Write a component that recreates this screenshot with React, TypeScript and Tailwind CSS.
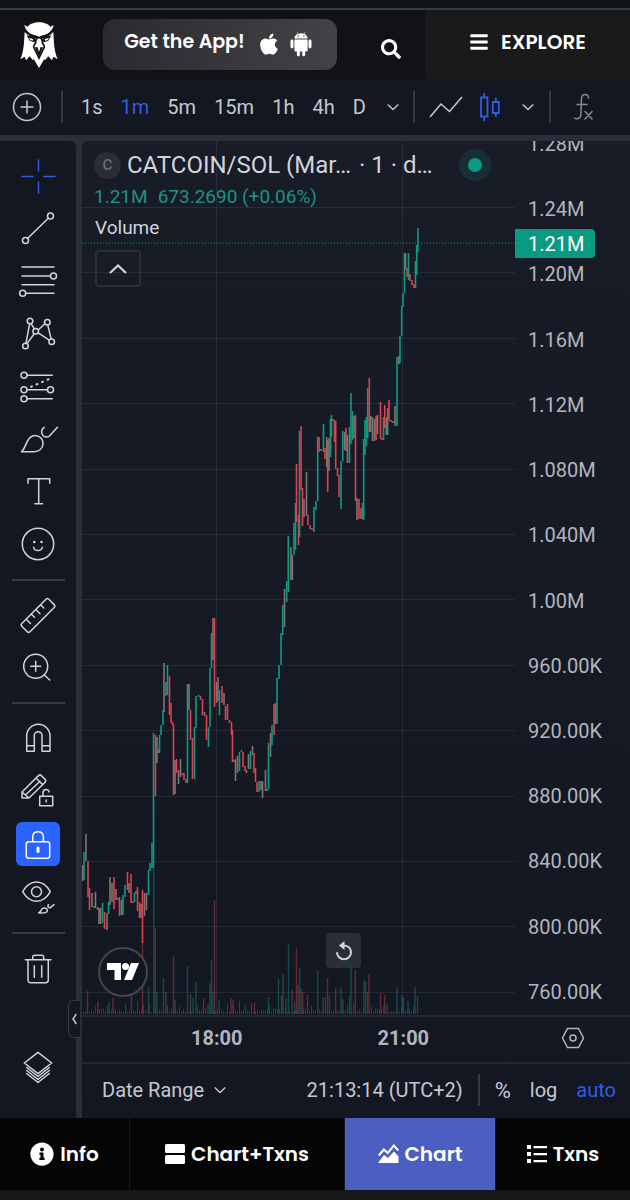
import { useState, type ReactNode } from 'react'
import { FaApple, FaBars, FaInfoCircle, FaSearch } from 'react-icons/fa'
import { AiFillAndroid } from 'react-icons/ai'

type Tone = 'up' | 'down' | 'mix'
type Candle = [x: number, high: number, low: number, tone: Tone]

const toneColor: Record<Tone, string> = {
  up: '#0f9a82',
  down: '#e0404f',
  mix: '#80756f',
}

const candles: Candle[] = [
  [82.5, 865, 881, 'mix'], [84, 852, 880, 'up'], [86, 834, 861, 'mix'], [88, 861, 897, 'down'],
  [89.5, 888, 910, 'down'], [92, 893, 907, 'mix'], [94, 906, 908, 'up'], [95.5, 892, 908, 'mix'],
  [97.5, 907, 910, 'down'], [99, 908, 924, 'mix'], [100.5, 908, 924, 'mix'], [102.5, 903, 923, 'up'],
  [104.5, 912, 929, 'down'], [107, 913, 930, 'mix'], [108.5, 902, 914, 'up'], [110, 877, 905, 'mix'],
  [112, 883, 902, 'mix'], [114, 877, 909, 'down'], [116, 889, 900, 'mix'], [118, 898, 900, 'up'],
  [119.5, 897, 916, 'down'], [121.5, 900, 915, 'mix'], [123, 895, 915, 'up'], [125, 885, 897, 'up'],
  [127.5, 872, 890, 'down'], [129, 883, 893, 'mix'], [131, 874, 903, 'down'], [133, 901, 903, 'down'],
  [134.5, 893, 902, 'up'], [136, 891, 894, 'up'], [137.5, 887, 911, 'down'], [139.5, 902, 918, 'down'],
  [141, 904, 918, 'mix'], [142.5, 890, 943, 'down'], [144.5, 893, 916, 'mix'], [146.5, 893, 910, 'mix'],
  [148.5, 870, 895, 'up'], [150, 863, 871, 'up'], [152, 843, 868, 'up'], [153.5, 733, 868, 'up'],
  [155.5, 735, 796, 'down'], [157, 737, 763, 'mix'], [158.5, 750, 753, 'down'], [159.5, 735, 753, 'up'],
  [161, 725, 735, 'up'], [163, 710, 725, 'up'], [164, 663, 712, 'mix'], [166, 682, 696, 'up'],
  [167.5, 665, 695, 'up'], [169.5, 676, 715, 'down'], [171, 703, 723, 'down'], [172.5, 722, 725, 'down'],
  [173.5, 724, 795, 'down'], [175, 760, 794, 'mix'], [176.5, 759, 773, 'down'], [178.5, 770, 784, 'mix'],
  [180.5, 759, 777, 'mix'], [182.5, 773, 775, 'down'], [184, 773, 780, 'down'], [186, 779, 783, 'down'],
  [187.5, 684, 783, 'up'], [189, 684, 710, 'mix'], [190.5, 710, 740, 'down'], [192.5, 738, 779, 'down'],
  [194.5, 727, 779, 'up'], [196, 696, 728, 'up'], [198.5, 695, 697, 'up'], [200.5, 696, 700, 'down'],
  [202.5, 699, 715, 'down'], [204.5, 712, 716, 'mix'], [206.5, 715, 740, 'down'], [208.5, 727, 747, 'up'],
  [210, 668, 727, 'up'], [211.5, 633, 668, 'up'], [213, 618, 660, 'mix'], [214.5, 618, 707, 'down'],
  [216.5, 682, 703, 'mix'], [218, 677, 701, 'mix'], [219.5, 690, 715, 'up'], [222, 686, 703, 'down'],
  [224, 693, 705, 'mix'], [225.5, 706, 720, 'down'], [227.5, 704, 720, 'down'], [229.5, 720, 723, 'down'],
  [231.5, 722, 735, 'down'], [232.5, 730, 762, 'down'], [234, 760, 762, 'down'], [235.5, 759, 781, 'mix'],
  [237.5, 756, 773, 'mix'], [239.5, 752, 771, 'up'], [241.5, 750, 752, 'up'], [243, 752, 767, 'down'],
  [245, 766, 771, 'down'], [246.5, 770, 773, 'mix'], [248.5, 754, 769, 'mix'], [250.5, 751, 769, 'up'],
  [252.5, 746, 755, 'mix'], [254, 753, 773, 'down'], [255.5, 768, 782, 'down'], [257, 782, 792, 'down'],
  [259, 781, 792, 'up'], [261, 781, 790, 'mix'], [262.5, 781, 798, 'mix'], [265.5, 770, 791, 'mix'],
  [267, 789, 791, 'mix'], [268.5, 743, 789, 'up'], [270.5, 733, 757, 'mix'], [272, 725, 745, 'up'],
  [274, 704, 735, 'down'], [275.5, 703, 724, 'down'], [277, 678, 724, 'up'], [279, 665, 679, 'up'],
  [281, 633, 665, 'up'], [282.7, 605, 635, 'up'], [284.5, 589, 627, 'mix'], [286.7, 581, 602, 'up'],
  [288.3, 536, 592, 'up'], [291, 547, 580, 'mix'], [292.3, 555, 580, 'mix'], [294, 523, 555, 'up'],
  [295.5, 503, 550, 'up'], [296.5, 464, 522, 'down'], [298.5, 515, 545, 'down'], [299.5, 431, 537, 'up'],
  [301, 426, 490, 'down'], [302.5, 488, 526, 'down'], [304, 499, 517, 'mix'], [306.5, 472, 516, 'mix'],
  [308, 515, 525, 'down'], [310, 525, 529, 'down'], [312, 528, 530, 'down'], [314, 507, 532, 'up'],
  [316, 501, 510, 'up'], [317.7, 437, 501, 'up'], [319, 437, 452, 'down'], [321, 449, 451, 'mix'],
  [323.5, 424, 452, 'up'], [325, 448, 459, 'down'], [326.7, 437, 467, 'mix'], [327.7, 440, 492, 'down'],
  [329, 438, 471, 'mix'], [330.5, 419, 457, 'up'], [331.5, 415, 437, 'up'], [333, 419, 421, 'mix'],
  [334.5, 420, 442, 'down'], [335.7, 421, 469, 'down'], [337.5, 468, 476, 'down'], [339, 475, 497, 'down'],
  [341, 461, 509, 'up'], [342.7, 431, 461, 'up'], [344.5, 432, 450, 'mix'], [346, 428, 451, 'down'],
  [347.5, 435, 463, 'mix'], [349.5, 427, 463, 'up'], [351, 393, 444, 'up'], [352.5, 411, 440, 'up'],
  [354, 416, 438, 'mix'], [355.5, 415, 501, 'down'], [357, 498, 520, 'mix'], [359, 499, 519, 'down'],
  [361, 508, 519, 'down'], [362.5, 503, 519, 'up'], [363.7, 439, 520, 'up'], [365, 420, 455, 'up'],
  [366.5, 417, 446, 'up'], [367.7, 388, 438, 'up'], [369.3, 378, 432, 'down'], [370.7, 416, 432, 'mix'],
  [372.5, 417, 441, 'mix'], [374.5, 419, 441, 'mix'], [376, 416, 440, 'down'], [377.5, 415, 434, 'mix'],
  [380.5, 402, 439, 'down'], [382, 438, 440, 'down'], [383.5, 417, 440, 'up'], [384.7, 405, 428, 'down'],
  [386.3, 417, 435, 'mix'], [387.7, 408, 435, 'up'], [389, 400, 421, 'down'], [391, 420, 422, 'down'],
  [393, 421, 423, 'mix'], [395, 406, 426, 'mix'], [397, 357, 426, 'up'], [398.7, 356, 364, 'mix'],
  [400, 336, 363, 'up'], [401.7, 306, 336, 'up'], [403, 293, 307, 'up'], [404.5, 253, 293, 'up'],
  [405.5, 253, 269, 'mix'], [407, 268, 277, 'down'], [408.5, 253, 280, 'up'], [410, 274, 281, 'down'],
  [412, 280, 285, 'down'], [414, 284, 288, 'down'], [415.5, 261, 288, 'up'], [416.7, 245, 275, 'up'],
  [418, 228, 252, 'up'],
]

// the tall volume bars: [x, top, tone]
const volumeSpikes: [number, number, Tone][] = [
  [87.5, 991, 'down'], [98, 1001, 'down'], [109, 1002, 'up'], [113, 998, 'down'], [131.5, 995, 'down'],
  [142.5, 943, 'down'], [148.5, 987, 'up'], [153.8, 867, 'up'], [155.2, 928, 'mix'], [157, 992, 'up'],
  [163.5, 978, 'up'], [166, 992, 'mix'], [173.5, 956, 'down'], [175, 1000, 'mix'], [187.5, 966, 'up'],
  [190.5, 994, 'mix'], [193, 998, 'up'], [196, 982, 'up'], [203.5, 998, 'down'], [208, 1004, 'up'],
  [210, 983, 'up'], [211.5, 960, 'up'], [213, 991, 'up'], [214.5, 900, 'down'], [219, 1000, 'up'],
  [231, 998, 'down'], [233, 1000, 'down'], [254.5, 1003, 'down'], [268.5, 997, 'up'], [278.5, 979, 'up'],
  [281.5, 996, 'up'], [283, 974, 'mix'], [286, 998, 'up'], [288.5, 944, 'up'], [292, 990, 'down'],
  [294.5, 1001, 'up'], [296.5, 948, 'down'], [298, 985, 'mix'], [299.7, 968, 'up'], [301, 988, 'up'],
  [302.7, 992, 'down'], [307.5, 995, 'down'], [317.7, 970, 'up'], [323, 997, 'up'], [325.5, 997, 'down'],
  [327.5, 978, 'down'], [329.5, 995, 'up'], [335.7, 988, 'down'], [341, 987, 'up'], [343, 999, 'up'],
  [349.5, 996, 'up'], [351, 968, 'up'], [355.3, 970, 'down'], [364, 980, 'up'], [365.5, 982, 'up'],
  [367.5, 992, 'down'], [369, 974, 'down'], [380.5, 993, 'down'], [384.7, 995, 'down'], [387, 1004, 'up'],
  [397, 987, 'up'], [402, 995, 'up'], [403.5, 998, 'up'], [408, 1001, 'up'], [415, 987, 'up'],
  [417.5, 996, 'up'],
]

const prices = [
  '1.28M', '1.24M', '1.20M', '1.16M', '1.12M', '1.080M', '1.040M', '1.00M',
  '960.00K', '920.00K', '880.00K', '840.00K', '800.00K', '760.00K',
]

function PriceChart() {
  return (
    <svg viewBox="82 141 433 874" preserveAspectRatio="none" className="block h-full w-full" role="img" aria-label="CATCOIN/SOL price chart">
      <g stroke="#ffffff" strokeOpacity="0.07">
        {prices.slice(1).map((p, i) => (
          <line key={p} x1="82" x2="515" y1={207.5 + Math.round(i * 65.4)} y2={207.5 + Math.round(i * 65.4)} />
        ))}
        <line x1="216.5" x2="216.5" y1="141" y2="1015" />
        <line x1="402.5" x2="402.5" y1="141" y2="1015" />
      </g>
      <g opacity="0.4">
        {Array.from({ length: 168 }, (_, i) => {
          const h = 2 + ((i * i * 7 + i * 13) % 17) * ((i * 5) % 3 === 0 ? 0.8 : 0.25)
          return <rect key={i} x={83 + i * 2} y={1014 - h} width="1" height={h} fill={i % 7 < 3 ? toneColor.down : toneColor.up} />
        })}
        {volumeSpikes.map(([x, top, tone]) => (
          <rect key={x} x={x - 0.7} y={top} width="1.4" height={1014 - top} fill={toneColor[tone]} />
        ))}
      </g>
      {candles.map(([x, high, low, tone]) => (
        <rect key={x} x={x - 0.8} y={high} width="1.6" height={low - high} fill={toneColor[tone]} />
      ))}
      <line x1="82" x2="515" y1="243" y2="243" stroke="#0f9a82" strokeDasharray="1 2" />
    </svg>
  )
}

function Icon({ children, className = 'size-11' }: { children: ReactNode; className?: string }) {
  return (
    <svg viewBox="0 0 44 44" className={className} fill="none" stroke="currentColor" strokeWidth="1.5" strokeLinecap="round" strokeLinejoin="round" aria-hidden="true">
      {children}
    </svg>
  )
}

const drawTools: { name: string; icon: ReactNode }[] = [
  { name: 'Cross', icon: <path d="M6 22.5h11M28 22.5h11M22.5 6v11M22.5 28v11" /> },
  {
    name: 'Trend line',
    icon: <><circle cx="9.5" cy="33.5" r="3" /><circle cx="34.5" cy="9" r="3" /><path d="M11.7 31.3 32.3 11.2" /></>,
  },
  {
    name: 'Fib retracement',
    icon: <><path d="M6 8h32M6 17h28.5M6 25.7h32M10 34.3h28" /><circle cx="37.5" cy="17" r="3" /><circle cx="6.7" cy="34.3" r="3" /></>,
  },
  {
    name: 'XABCD pattern',
    icon: (
      <>
        <circle cx="14" cy="9" r="2.8" /><circle cx="31.3" cy="10.3" r="2.8" /><circle cx="19.7" cy="19.3" r="2.8" />
        <circle cx="9.5" cy="34" r="2.8" /><circle cx="35.7" cy="29.7" r="2.8" />
        <path d="m15 11.6 3.4 5.2M13.6 11.8 10 31.2M11 31.6l7.2-9.8M22.2 18l6.7-6.2M31.8 13.1l3.3 13.8M22.2 20.9l11.1 7.2" />
      </>
    ),
  },
  {
    name: 'Long position',
    icon: (
      <>
        <circle cx="8" cy="11.3" r="3" /><circle cx="8" cy="25.7" r="3" /><circle cx="34.5" cy="25.7" r="3" /><circle cx="8" cy="34.7" r="3" />
        <path d="M11 11.3h25.3M11 25.7h20.5M11 34.7h25.3" />
        <path d="M15 22.8 36 13.8" strokeDasharray="1 5" strokeWidth="2" />
      </>
    ),
  },
  {
    name: 'Brush',
    icon: <path d="M5.5 34.7C9.5 31.5 10 24 14 20.6c5-4.4 13-1 13 5.9 0 5-4 8.2-9 8.2ZM28.3 10.3c-4.6 2.7-2.8 9.7 2.4 9.7 1.2 0 2.2-.4 3-1.2l7.7-8.5" />,
  },
  { name: 'Text', icon: <path d="M12 14.3V9.7h21.7v4.6M22.7 9.7v25M19 34.7h7.5" /> },
  {
    name: 'Icon',
    icon: (
      <>
        <circle cx="22" cy="22" r="15.7" />
        <circle cx="18.3" cy="20" r="1.3" fill="currentColor" stroke="none" /><circle cx="25.5" cy="20" r="1.3" fill="currentColor" stroke="none" />
        <path d="M17.7 25.3c1 4.3 7.6 4.3 8.6 0" />
      </>
    ),
  },
]

const measureTools: { name: string; icon: ReactNode }[] = [
  {
    name: 'Measure',
    icon: <path d="M30 6.2a2 2 0 0 1 2.8 0l5.4 5.4a2 2 0 0 1 0 2.8L14 38.7a2 2 0 0 1-2.8 0l-5.4-5.4a2 2 0 0 1 0-2.8ZM10.5 26.5l4 4M15.5 21.2l3 3M20 16.8l4 4M24.8 12l3 3" />,
  },
  { name: 'Zoom in', icon: <><circle cx="19.7" cy="21.3" r="12" /><path d="M14.7 21.3h10M19.7 16.3v10M28.3 30l5.4 5" /></> },
]

const lockTools: { name: string; icon: ReactNode }[] = [
  {
    name: 'Magnet mode',
    icon: <path d="M10.7 20a11.6 11.6 0 0 1 23.3 0v15.3h-8V19.5a3.8 3.8 0 0 0-7.7 0v15.8h-7.6ZM10.7 29.7h7.6M26 29.7h8" />,
  },
  {
    name: 'Stay in drawing mode',
    icon: (
      <>
        <path d="M6 29v-6L22.5 6.6a2 2 0 0 1 2.8 0l3.800 3.800a2 2 0 0 1 0 2.800L13 29ZM6 23l7 6M20 9l6.800 6.800M9.500 26 24 12.200" />
        <path d="M23.7 27.3h13v9.4h-13ZM27 27v-3.5c0-4 6-4 6-.5M30.2 31v2" />
      </>
    ),
  },
  {
    name: 'Lock all drawings',
    icon: (
      <>
        <rect x="10.3" y="19.7" width="23.4" height="16.6" rx="2.5" />
        <path d="M16.7 19.5v-5a5.4 5.4 0 0 1 10.7 0v5" />
        <path d="M22 26v3.5" strokeWidth="3" />
      </>
    ),
  },
  {
    name: 'Hide all drawings',
    icon: (
      <>
        <path d="M6.7 16.7c3-5.500 8-9.700 13.800-9.700s10.800 4.200 13.800 9.700c-3 5.500-8 9.600-13.800 9.600S9.700 22.200 6.700 16.700Z" />
        <circle cx="20.5" cy="16.7" r="5" />
        <path d="M22.700 38c2-1 2.200-3.500 4-4.600 2.600-1.400 5.400.6 4.500 2.900-.8 2-4.500 1.900-8.500 1.700ZM32.500 29.500c-1.500 1.700 0 3.800 1.800 3.200l3.700-3" />
      </>
    ),
  },
]

function ToolButton({ name, active, filled, onClick, children }: { name: string; active?: boolean; filled?: boolean; onClick?: () => void; children: ReactNode }) {
  return (
    <button
      type="button"
      aria-label={name}
      onClick={onClick}
      className={`size-11 rounded-md ${filled ? 'bg-[#2962ff] text-white' : active ? 'text-[#2f5de0]' : 'text-[#d1d4dc]'}`}
    >
      <Icon>{children}</Icon>
    </button>
  )
}

function Chevron({ className = '' }: { className?: string }) {
  return (
    <svg viewBox="0 0 12 8" className={`h-2 w-3 ${className}`} fill="none" stroke="currentColor" strokeWidth="1.4" aria-hidden="true">
      <path d="m.7 1.5 5.3 5 5.3-5" />
    </svg>
  )
}

function EagleLogo() {
  return (
    <svg viewBox="33 24 114 138" className="h-[46px] w-[38px]" aria-hidden="true">
      <path fill="#fff" d="m46 33 10 5c12-18 56-18 68 0l10-5c-3 14-10 22-20 27l-24 9-24-9c-10-5-17-13-20-27Z" />
      <path fill="#fff" d="M47 54c-2 26-1 54-13 82l13-8 4 11 11-12 10 12 2-4 16 27 16-27 2 4 10-12 11 12 4-11 13 8c-12-28-11-56-13-82l-19 15-24 6-24-6Z" />
      <path fill="none" stroke="#121216" strokeWidth="6" d="M50 50c6 10 18 16 32 18l8 5 8-5c14-2 26-8 32-18" />
      <path fill="#121216" d="m53 64 9 16 13 5 5-5-2-10ZM127 64l-9 16-13 5-5-5 2-10Z" />
      <path fill="#fff" d="m60 71 13 5-2 4c-5 0-9-3-11-9ZM120 71l-13 5 2 4c5 0 9-3 11-9Z" />
      <path fill="#fff" stroke="#121216" strokeWidth="5" strokeLinejoin="miter" d="M90 71c-8 0-10 6-10 14-1 6-6 8-6 14l16 33 16-33c0-6-5-8-6-14 0-8-2-14-10-14Z" />
      <path fill="#121216" d="m78 100 7-1 5 14 5-14 7 1-12 30Z" />
    </svg>
  )
}

function Header() {
  return (
    <header className="flex h-[69px] bg-[#121216] text-white">
      <div className="flex flex-1 items-center justify-between pr-6 pl-5">
        <a href="#home" aria-label="Home">
          <EagleLogo />
        </a>
        <a href="#app" className="mr-5 ml-5 flex h-[51px] w-[234px] items-center justify-center rounded-xl bg-gradient-to-r from-[#2b2b2f] to-[#434246] pb-0.5 text-[19px] font-semibold whitespace-nowrap">
          <span className="pb-0.5">Get the App!</span>
          <FaApple className="ml-3 size-6" />
          <AiFillAndroid className="ml-1.5 size-7" />
        </a>
        <button type="button" aria-label="Search">
          <FaSearch className="mt-2 size-5" />
        </button>
      </div>
      <button type="button" className="flex w-[205px] items-center justify-center gap-3 bg-[#1a1a1a] pb-1.5 text-[20px] font-semibold">
        <FaBars className="size-5" />
        EXPLORE
      </button>
    </header>
  )
}

const intervals = ['1s', '1m', '5m', '15m', '1h', '4h', 'D']

function Toolbar() {
  const [interval, setInterval] = useState('1m')

  return (
    <div className="flex h-14 items-center overflow-hidden bg-[#131722] pl-3 font-[Roboto,sans-serif] text-[20px] text-[#c5c8d2]">
      <button type="button" aria-label="Add symbol" className="mr-[19px] shrink-0">
        <svg viewBox="0 0 30 30" className="size-[30px]" fill="none" stroke="currentColor" strokeWidth="1.5" aria-hidden="true">
          <circle cx="15" cy="15" r="13.5" />
          <path d="M15 8.5v13M8.5 15h13" />
        </svg>
      </button>
      <span className="h-8 w-0.5 shrink-0 bg-[#363a45]" />
      <div className="ml-[18px] flex gap-[18px]">
        {intervals.map((item) => (
          <button key={item} type="button" onClick={() => setInterval(item)} className={item === interval ? 'text-[#2f5de0]' : ''}>
            {item}
          </button>
        ))}
      </div>
      <button type="button" aria-label="More intervals" className="ml-[21px] shrink-0">
        <Chevron />
      </button>
      <span className="ml-[14px] h-8 w-0.5 shrink-0 bg-[#363a45]" />
      <button type="button" aria-label="Line chart" className="ml-[14px] shrink-0">
        <svg viewBox="0 0 34 22" className="h-[22px] w-[34px]" fill="none" stroke="currentColor" strokeWidth="1.5" aria-hidden="true">
          <path d="M1 21 12 8l8.5 7.5L33 1" />
        </svg>
      </button>
      <button type="button" aria-label="Candles" className="ml-[17px] shrink-0 text-[#2f5de0]">
        <svg viewBox="0 0 20 30" className="h-[30px] w-5" fill="none" stroke="currentColor" strokeWidth="1.8" aria-hidden="true">
          <path d="M1 5.5h6.5v19H1ZM4.200 1v4.500M4.200 24.500V29M12.800 10h6v11h-6ZM15.800 5.500V10M15.800 21v4" />
        </svg>
      </button>
      <button type="button" aria-label="More chart types" className="ml-[22px] shrink-0">
        <Chevron />
      </button>
      <span className="ml-[15px] h-8 w-0.5 shrink-0 bg-[#363a45]" />
      <button type="button" aria-label="Indicators" className="ml-[22px] shrink-0 text-[#858994]">
        <svg viewBox="0 0 20 28" className="h-7 w-5" fill="none" stroke="currentColor" strokeWidth="1.5" strokeLinecap="round" aria-hidden="true">
          <path d="M15.5 5c0-4.500-6.500-5-7 0l-.7 17c-.2 4-4.500 4.500-6.500 3M4 11.500h10M12 18.500l7 7.500M19 18.500 12 26" />
        </svg>
      </button>
    </div>
  )
}

function Sidebar() {
  const [tool, setTool] = useState('Cross')
  const [locked, setLocked] = useState(true)
  const divider = <hr className="mt-[13px] mb-3 h-0.5 w-[53px] shrink-0 border-0 bg-[#363a45]" />

  return (
    <aside className="relative mr-1.5 flex w-[76px] shrink-0 flex-col items-center rounded-tr-md bg-[#131722] pt-[13px]">
      <div className="flex h-[412px] flex-col justify-between">
        {drawTools.map((t) => (
          <ToolButton key={t.name} name={t.name} active={tool === t.name} onClick={() => setTool(t.name)}>
            {t.icon}
          </ToolButton>
        ))}
      </div>
      {divider}
      <div className="flex flex-col gap-2">
        {measureTools.map((t) => (
          <ToolButton key={t.name} name={t.name}>{t.icon}</ToolButton>
        ))}
      </div>
      {divider}
      <div className="flex h-[203px] flex-col justify-between">
        {lockTools.map((t) => {
          const isLock = t.name === 'Lock all drawings'
          return (
            <ToolButton key={t.name} name={t.name} filled={isLock && locked} onClick={isLock ? () => setLocked(!locked) : undefined}>
              {t.icon}
            </ToolButton>
          )
        })}
      </div>
      {divider}
      <ToolButton name="Remove objects">
        <path d="M9.300 13.700H35M16.700 13.500v-2.200a2 2 0 0 1 2-2h7a2 2 0 0 1 2 2v2.200M12 14v20a2.700 2.700 0 0 0 2.700 2.700h15a2.700 2.700 0 0 0 2.600-2.700V14M18.300 19.700v11.600M25.700 19.700v11.600" />
      </ToolButton>
      <div className="mt-auto mb-[22px]">
        <ToolButton name="Object tree">
          <path d="m22 7.3 13.700 10.700L22 28.700 8.300 18ZM10.700 22.500 22 31.500l11.300-9M10.700 25.500 22 34.500l11.300-9M10.700 28.500 22 37.500l11.300-9" />
        </ToolButton>
      </div>
      <button type="button" aria-label="Hide toolbar" className="absolute -right-1 bottom-20 flex h-[38px] w-3 items-center justify-center rounded-l-md border border-r-0 border-[#363a45] bg-[#131722] text-[#c5c8d2]">
        <svg viewBox="0 0 5 12" className="h-3 w-[5px]" fill="none" stroke="currentColor" strokeWidth="1.5" aria-hidden="true">
          <path d="M4.3 1 1 6l3.300 5" />
        </svg>
      </button>
    </aside>
  )
}

function Legend() {
  const [open, setOpen] = useState(true)

  return (
    <div className="absolute top-2 left-3 text-[19px]">
      <div className="flex h-8 items-center text-[24px] whitespace-nowrap text-[#d1d4dc]">
        <span className="mr-1.5 flex size-[27px] items-center justify-center rounded-full bg-[#2a2d36] text-[15px] font-medium text-[#6a6d78]">C</span>
        <span>CATCOIN/SOL (Mar…</span>
        <span className="ml-2">· 1 · d…</span>
        <span className="ml-[26px] flex size-8 items-center justify-center rounded-full bg-[#162f35]">
          <span className="size-3.5 rounded-full bg-[#0a9981]" />
        </span>
      </div>
      <div className="flex h-8 items-center gap-2.5 text-[#1d9480]">
        <span>1.21M</span>
        <span>673.2690 (+0.06%)</span>
      </div>
      {open && <div className="flex h-[30px] items-center pl-px text-[#d1d4dc]">Volume</div>}
      <button
        type="button"
        aria-label="Toggle legend"
        onClick={() => setOpen(!open)}
        className="mt-[7px] ml-px flex h-[37px] w-[46px] items-center justify-center rounded border-2 border-[#2a2e39] text-[#d1d4dc]"
      >
        <svg viewBox="0 0 18 10" className="h-2.5 w-[18px]" fill="none" stroke="currentColor" strokeWidth="2.2" aria-hidden="true">
          <path d="m1 9 8-7.500L17 9" />
        </svg>
      </button>
    </div>
  )
}

function ChartPanel() {
  return (
    <section className="flex min-w-0 flex-1 flex-col overflow-hidden rounded-tl-md bg-gradient-to-b from-[#181c27] to-[#131722] font-[Roboto,sans-serif]">
      <div className="flex h-[874px] shrink-0">
        <div className="relative min-w-0 flex-1">
          <PriceChart />
          <Legend />
          <a href="#tradingview" aria-label="TradingView" className="absolute bottom-[18px] left-4 flex size-[50px] items-center justify-center rounded-full border-2 border-[#434651] bg-[#131722]">
            <svg viewBox="0 0 32 18" className="h-[18px] w-8" fill="#fff" aria-hidden="true">
              <path d="M0 0h14v17H7.500V7H0ZM24 0h8l-7 17h-8Z" />
              <circle cx="18.5" cy="3.5" r="3.5" />
            </svg>
          </a>
          <button type="button" aria-label="Reset chart" className="absolute right-[154px] bottom-[47px] flex size-[35px] items-center justify-center rounded bg-[#2a2e39] text-[#d1d4dc]">
            <svg viewBox="0 0 18 20" className="h-5 w-[18px]" fill="none" stroke="currentColor" strokeWidth="2" aria-hidden="true">
              <path d="M8 4.500c5 0 8 2.700 8 6.800a7 7 0 0 1-14 0" />
              <path d="M9.500 0v9L4 4.500Z" fill="currentColor" stroke="none" />
            </svg>
          </button>
        </div>
        <div className="relative w-[115px] shrink-0 overflow-hidden text-[20px] text-[#b2b5be]">
          <ul className="-mt-2 flex h-[870px] flex-col justify-between pl-[13px]">
            {prices.map((price) => (
              <li key={price} className="leading-[22px]">{price}</li>
            ))}
          </ul>
          <div className="absolute top-[88px] left-0 h-[29px] w-20 rounded-r-sm bg-[#0a9981] pl-[13px] leading-[30px] text-white">1.21M</div>
        </div>
      </div>
      <div className="flex h-[47px] shrink-0 items-center border-t-2 border-[#232732] pb-1 pl-[109px] text-[20px] font-bold text-[#b2b5be]">
        <span>18:00</span>
        <span className="ml-[135px]">21:00</span>
        <button type="button" aria-label="Axis settings" className="mr-[45px] ml-auto">
          <svg viewBox="0 0 24 24" className="size-6" fill="none" stroke="currentColor" strokeWidth="1.5" aria-hidden="true">
            <path d="M6.500 2.500h11L22.500 12l-5 9.500h-11L1.500 12Z" />
            <circle cx="12" cy="12" r="3" />
          </svg>
        </button>
      </div>
      <div className="flex flex-1 items-center border-t-2 border-[#232732] pr-3.5 pb-0.5 pl-5 text-[20px] whitespace-nowrap text-[#c5c8d2]">
        <button type="button" className="flex items-center gap-2.5">
          Date Range
          <Chevron />
        </button>
        <button type="button" className="ml-auto">21:13:14 (UTC+2)</button>
        <span className="mx-[15px] h-8 w-0.5 bg-[#363a45]" />
        <div className="flex items-center gap-[19px]">
          <button type="button" className="text-[22px]">%</button>
          <button type="button">log</button>
          <button type="button" className="text-[#2f5de0]">auto</button>
        </div>
      </div>
    </section>
  )
}

const tabs: { name: string; icon: ReactNode }[] = [
  { name: 'Info', icon: <FaInfoCircle className="size-6" /> },
  {
    name: 'Chart+Txns',
    icon: (
      <svg viewBox="0 0 20 20" className="size-5" fill="currentColor" aria-hidden="true">
        <rect width="20" height="9" rx="1.5" />
        <rect y="11" width="20" height="9" rx="1.5" />
      </svg>
    ),
  },
  {
    name: 'Chart',
    icon: (
      <svg viewBox="0 0 21 20" className="h-5 w-[21px]" fill="currentColor" aria-hidden="true">
        <path d="m0 19 6-8 4 3 6-6.500 4.500 5V19Z" />
        <path d="m.8 11.500 5-6 4 3.500 6-7.500 4.500 5" fill="none" stroke="currentColor" strokeWidth="2" />
      </svg>
    ),
  },
  {
    name: 'Txns',
    icon: (
      <svg viewBox="0 0 20 18" className="h-[18px] w-5" fill="currentColor" aria-hidden="true">
        <path d="M0 0h4v4H0ZM0 7h4v4H0ZM0 14h4v4H0ZM6.500 1H20v2.200H6.500ZM6.500 8H20v2.200H6.500ZM6.500 15H20v2.200H6.500Z" />
      </svg>
    ),
  },
]

function BottomTabs() {
  const [tab, setTab] = useState('Chart')

  return (
    <nav className="grid h-[72px] grid-cols-[130fr_215fr_151fr_134fr] bg-[#050505] text-[20px] font-semibold text-white">
      {tabs.map((t) => (
        <button
          key={t.name}
          type="button"
          onClick={() => setTab(t.name)}
          className={`flex items-center justify-center gap-1.5 border-r border-[#1a1a1a] last:border-r-0 ${tab === t.name ? 'bg-[#4a5fc1]' : ''}`}
        >
          {t.icon}
          {t.name}
        </button>
      ))}
    </nav>
  )
}

export default function App() {
  return (
    <div className="flex min-h-screen flex-col bg-[#171719] font-[Poppins,Inter,sans-serif]">
      <div className="h-2.5 border-b-2 border-[#383c40] bg-[#10151a]" />
      <Header />
      <Toolbar />
      <main className="flex h-[983px] bg-[#2a2e39] pt-1.5">
        <Sidebar />
        <ChartPanel />
      </main>
      <BottomTabs />
    </div>
  )
}
